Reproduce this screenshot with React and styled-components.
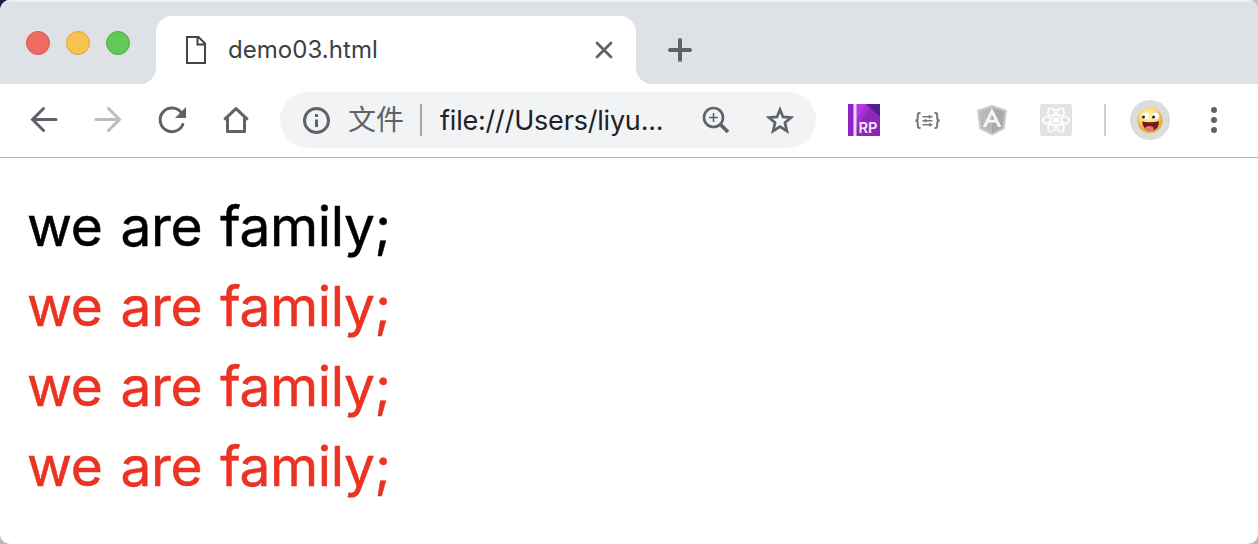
import React from "react";
import styled, { createGlobalStyle } from "styled-components";

const GlobalStyle = createGlobalStyle`
  * { box-sizing: border-box; }
  body { margin: 0; background: linear-gradient(90deg, #1a2344 50%, #c4c4c4 50%) top / 100% 50% no-repeat #b8b8b8; overflow: hidden; }
`;

const ui = `Inter, "Noto Sans CJK SC", sans-serif`;

const Window = styled.div`
  width: 1258px;
  height: 544px;
  display: flex;
  flex-direction: column;
  overflow: hidden;
  border-radius: 10px;
  background: #fff;
  font-family: ${ui};
`;

const TabStrip = styled.header`
  height: 84px;
  display: flex;
  align-items: flex-end;
  background: #dee1e6;
  box-shadow: inset 0 2px 0 #eef0f2;
`;

const TrafficLights = styled.div`
  width: 156px;
  height: 84px;
  padding: 31px 0 0 26px;
  display: flex;
  gap: 16px;
`;

const Light = styled.span`
  width: 24px;
  height: 24px;
  border-radius: 50%;
  background: ${(p) => p.$fill};
  border: 1px solid ${(p) => p.$edge};
`;

const Tab = styled.div`
  position: relative;
  width: 480px;
  height: 68px;
  padding: 0 16px 0 28px;
  display: flex;
  align-items: center;
  border-radius: 16px 16px 0 0;
  background: #fff;

  &::before,
  &::after {
    content: "";
    position: absolute;
    bottom: 0;
    width: 16px;
    height: 16px;
  }
  &::before {
    left: -16px;
    background: radial-gradient(circle at 0 0, transparent 15.5px, #fff 16.5px);
  }
  &::after {
    right: -16px;
    background: radial-gradient(circle at 100% 0, transparent 15.5px, #fff 16.5px);
  }
`;

const TabTitle = styled.span`
  flex: 1;
  margin-left: 12px;
  font-size: 24px;
  letter-spacing: 0.05px;
  line-height: 34px;
  color: #3c4043;
`;

const NewTab = styled.div`
  height: 68px;
  margin-left: 32px;
  display: flex;
  align-items: center;
`;

const Toolbar = styled.nav`
  height: 74px;
  flex: none;
  padding: 0 28px 1px;
  display: flex;
  align-items: center;
  border-bottom: 1px solid #b3b4b6;
  background: #fff;
`;

const Group = styled.div`
  display: flex;
  align-items: center;
  gap: 32px;
`;

const Omnibox = styled.div`
  width: 536px;
  height: 56px;
  margin: 0 32px 0 28px;
  padding: 0 20px;
  display: flex;
  align-items: center;
  border-radius: 28px;
  background: #f1f3f4;
`;

const Scheme = styled.span`
  width: 56px;
  margin-left: 16px;
  font-size: 28px;
  line-height: 36px;
  color: #5f6368;
`;

const Divider = styled.span`
  width: 2px;
  height: 32px;
  background: ${(p) => p.$color};
  margin: ${(p) => p.$margin};
`;

const Url = styled.span`
  flex: 1;
  font-size: 27px;
  letter-spacing: -0.2px;
  line-height: 36px;
  padding-top: 1px;
  white-space: nowrap;
  color: #202124;
`;

const Avatar = styled.div`
  width: 40px;
  height: 40px;
  margin-right: 28px;
  display: flex;
  align-items: center;
  justify-content: center;
  border-radius: 50%;
  background: #dcdcdc;
`;

const Glyph = styled.svg`
  width: 32px;
  height: 32px;
  flex: none;
  display: block;
  fill: none;
  stroke: ${(p) => p.$color || "#5f6368"};
  stroke-width: 3;
`;

const Page = styled.main`
  padding: 28px 0 0 27px;
`;

const Line = styled.p`
  margin: 0;
  font-size: 55px;
  line-height: 80px;
  letter-spacing: -0.35px;
  word-spacing: 3px;
  white-space: nowrap;
  color: ${(p) => p.$color};
  -webkit-text-stroke: 0.5px currentColor;
`;

const Icon = ({ color, children }) => (
  <Glyph viewBox="0 0 32 32" $color={color}>{children}</Glyph>
);

const Arrow = () => <path d="M28 15.500H5M15.500 4.500L4.500 15.500L15.500 26.500" strokeLinecap="round" />;

const Axure = () => (
  <Icon>
    <g stroke="none">
      <path d="M0 0h32v32H0z" fill="#a12fd0" />
      <path d="M8 24L22 4L32 14V32H8z" fill="#8a29b5" />
      <path d="M18 0h14v13z" fill="#54208a" />
      <path d="M8 0h11L8 16z" fill="#b534e5" />
      <path d="M0 0h5.500v32H0z" fill="#8f22c4" />
      <path d="M5.500 0h3v32h-3z" fill="#f0d8fa" />
      <text x="10.500" y="28.500" fontFamily="Inter, sans-serif" fontSize="15" fontWeight="600" fill="#f5e4ff" textLength="19" lengthAdjust="spacingAndGlyphs">RP</text>
    </g>
  </Icon>
);

const Braces = () => (
  <Icon color="#777">
    <path strokeWidth="2" d="M8.500 9H7.500Q5.800 9 5.800 11V14Q5.800 16.500 3.300 16.500Q5.800 16.500 5.800 19V22Q5.800 24 7.500 24H8.500M22.500 9H23.500Q25.200 9 25.200 11V14Q25.200 16.500 27.700 16.500Q25.200 16.500 25.200 19V22Q25.200 24 23.500 24H22.500" />
    <path strokeWidth="1.500" d="M10.500 12.700H20.500M10.500 16.700H20.500M10.500 20.700H20.500M17.500 11V14.400M13.500 15V18.400M18 19V22.400" />
  </Icon>
);

const Angular = () => (
  <Icon>
    <g stroke="none">
      <path d="M16 1L31 6L28.500 25L16 31.500L3.500 25L1 6z" fill="#c9c9c9" />
      <path d="M16 3.500L28.500 7.500L26.500 23.500L16 29.500L5.500 23.500L3.500 7.500z" fill="#b9b9b9" />
      <path d="M16 3.500L28.500 7.500L26.500 23.500L16 29.500z" fill="#a9a9a9" />
      <path fillRule="evenodd" d="M16 4L25.500 23H22L19.800 18.500H12.200L10.200 23H6.700zM16 10.500L13.500 15.800H18.500z" fill="#f6f6f6" />
    </g>
  </Icon>
);

const ReactLogo = () => (
  <Icon color="#fff">
    <rect width="32" height="32" rx="2" fill="#e3e3e3" stroke="none" />
    <g strokeWidth="1.600">
      <ellipse cx="16" cy="16" rx="13.300" ry="5" />
      <ellipse cx="16" cy="16" rx="13.300" ry="5" transform="rotate(60 16 16)" />
      <ellipse cx="16" cy="16" rx="13.300" ry="5" transform="rotate(120 16 16)" />
    </g>
    <circle cx="16" cy="16" r="3" fill="#fff" stroke="none" />
  </Icon>
);

const Face = () => (
  <Icon>
    <defs>
      <radialGradient id="skin" cx="45%" cy="35%">
        <stop offset="0" stopColor="#fff3a8" />
        <stop offset="0.700" stopColor="#fbdc72" />
        <stop offset="1" stopColor="#e9ae45" />
      </radialGradient>
    </defs>
    <g stroke="none">
      <circle cx="16" cy="16.500" r="12.700" fill="url(#skin)" />
      <ellipse cx="11.500" cy="12" rx="3.600" ry="3.300" fill="#fff" />
      <ellipse cx="21.500" cy="12" rx="3.600" ry="3.300" fill="#fff" />
      <circle cx="9.500" cy="13" r="1.500" fill="#222" />
      <circle cx="19.500" cy="13" r="1.500" fill="#222" />
      <path d="M8 17.500Q16 19 25 17.200Q25 26.500 16.500 27Q9 26.500 8 17.500z" fill="#741b20" />
      <path d="M10.500 24Q14 20.500 19 23L20 26Q14.500 28.500 10.500 24z" fill="#e57a80" />
    </g>
  </Icon>
);

export default function App() {
  return (
    <Window>
      <GlobalStyle />
      <TabStrip>
        <TrafficLights>
          <Light $fill="#ed6b60" $edge="#d9574d" />
          <Light $fill="#f6c351" $edge="#d9a540" />
          <Light $fill="#62c956" $edge="#4bad3e" />
        </TrafficLights>
        <Tab>
          <Icon color="#444">
            <path d="M3 3H14.500L21 9.500V29H3zM13.500 3V10.500H21" strokeWidth="2" />
          </Icon>
          <TabTitle>demo03.html</TabTitle>
          <Icon><path d="M9 9L23 23M23 9L9 23" strokeLinecap="round" strokeWidth="2.800" /></Icon>
        </Tab>
        <NewTab>
          <Icon><path d="M12 6V26M2 16H22" strokeLinecap="round" strokeWidth="4" /></Icon>
        </NewTab>
      </TabStrip>
      <Toolbar>
        <Group>
          <Icon><Arrow /></Icon>
          <Icon color="#bbbdbf"><g transform="translate(32 0) scale(-1 1)"><Arrow /></g></Icon>
          <Icon>
            <path d="M26.800 20.500A11.800 11.800 0 1 1 25.300 8.700" strokeLinecap="round" />
            <path d="M30 3V14H19z" fill="#5f6368" stroke="none" />
          </Icon>
          <Icon>
            <path d="M7.500 14V27.500H24.500V14M4.300 15.700L16 4.700L27.700 15.700" strokeLinejoin="round" />
          </Icon>
        </Group>
        <Omnibox>
          <Icon>
            <circle cx="16.500" cy="16.500" r="12" />
            <path d="M16.500 10V13M16.500 15.500V23" />
          </Icon>
          <Scheme>文件</Scheme>
          <Divider $color="#a5a7aa" $margin="0 18px 0 16px" />
          <Url>file:///Users/liyu...</Url>
          <Group>
            <Icon>
              <circle cx="13.500" cy="13.500" r="9.500" strokeWidth="2.600" />
              <path d="M20.500 20.500L28 28" strokeWidth="3.800" />
              <path d="M13.500 9V18M9 13.500H18" strokeWidth="1.600" />
            </Icon>
            <Icon>
              <path d="M16 5.500L19 12.900L27 13.500L20.900 18.700L22.900 27L16 22.500L9.100 27L11.100 18.700L5 13.500L13 12.900z" strokeWidth="2.700" />
            </Icon>
          </Group>
        </Omnibox>
        <Group>
          <Axure />
          <Braces />
          <Angular />
          <ReactLogo />
        </Group>
        <Divider $color="#cdced0" $margin="0 24px 0 32px" />
        <Avatar><Face /></Avatar>
        <Icon>
          <g fill="#5f6368" stroke="none">
            <circle cx="16" cy="6" r="3" />
            <circle cx="16" cy="16" r="3" />
            <circle cx="16" cy="26" r="3" />
          </g>
        </Icon>
      </Toolbar>
      <Page>
        <Line $color="#000">we are family;</Line>
        <Line $color="#ea3323">we are family;</Line>
        <Line $color="#ea3323">we are family;</Line>
        <Line $color="#ea3323">we are family;</Line>
      </Page>
    </Window>
  );
}
